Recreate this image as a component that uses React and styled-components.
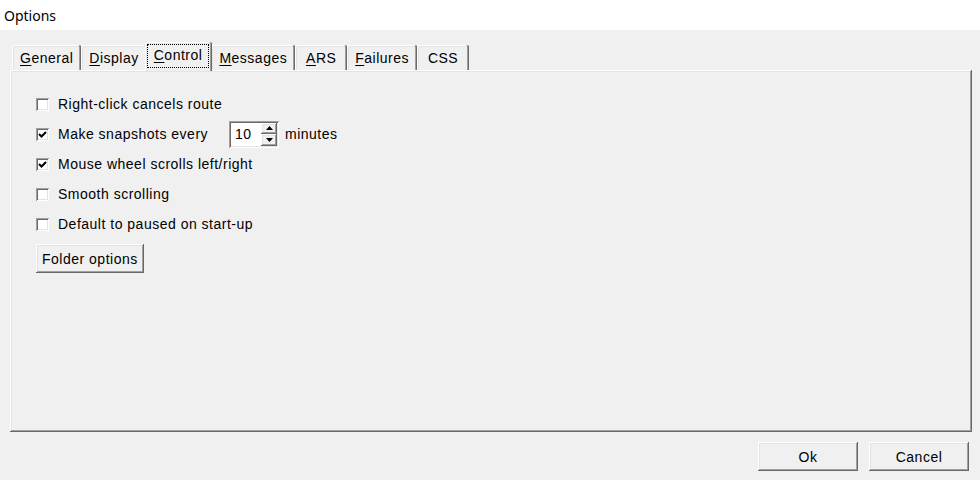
import React, { useState } from 'react';
import styled, { createGlobalStyle, css } from 'styled-components';

const FACE = '#f0f0f0';
const LIGHT = '#e3e3e3';
const SHADOW = '#a0a0a0';
const DARK = '#696969';

const raised = css`
  box-shadow:
    inset -1px -1px ${DARK},
    inset 1px 1px #ffffff,
    inset -2px -2px ${SHADOW},
    inset 2px 2px ${LIGHT};
`;

const sunken = css`
  box-shadow:
    inset 1px 1px ${SHADOW},
    inset -1px -1px #ffffff,
    inset 2px 2px ${DARK},
    inset -2px -2px ${LIGHT};
`;

const GlobalStyle = createGlobalStyle`
  html, body {
    margin: 0;
    padding: 0;
    background: ${FACE};
  }
  body {
    font-family: "Liberation Sans", Arial, sans-serif;
    font-size: 14px;
    letter-spacing: 0.5px;
    color: #000000;
  }
`;

const Window = styled.div`
  width: 980px;
  height: 480px;
  display: flex;
  flex-direction: column;
  background: ${FACE};
  overflow: hidden;
`;

const TitleBar = styled.div`
  height: 30px;
  flex-shrink: 0;
  display: flex;
  align-items: center;
  padding-left: 4px;
  background: #ffffff;
  font-family: "Noto Sans", "Open Sans", sans-serif;
  font-size: 14px;
  letter-spacing: 0;
`;

const Body = styled.div`
  display: flex;
  flex-direction: column;
  padding: 12px 8px 0 10px;
`;

const TabStrip = styled.div`
  display: flex;
  align-items: flex-end;
  height: 28px;
  padding-left: 2px;
`;

const Tab = styled.button`
  position: relative;
  display: flex;
  align-items: center;
  justify-content: center;
  min-width: 52px;
  margin: 0;
  padding: 0 8px;
  height: 25px;
  border: none;
  border-radius: 2px 2px 0 0;
  background: ${FACE};
  font: inherit;
  letter-spacing: inherit;
  color: inherit;
  cursor: default;
  box-shadow:
    inset -1px 0 ${DARK},
    inset 1px 1px #ffffff,
    inset -2px 0 ${SHADOW},
    inset 2px 2px ${LIGHT};

  ${(p) =>
    p.$active &&
    css`
      z-index: 1;
      height: 29px;
      margin: 0 -1px -1px -2px;
      padding: 2px 3px 3px 2px;
    `}
`;

const TabLabel = styled.span`
  display: flex;
  align-items: center;
  ${(p) =>
    p.$focused &&
    css`
      height: 100%;
      padding: 0 7px 2px;
      box-sizing: border-box;
      outline: 1px dotted #000000;
      outline-offset: -1px;
    `}
`;

const Key = styled.span`
  text-decoration: underline;
  text-underline-offset: 2px;
`;

const Panel = styled.div`
  height: 362px;
  box-sizing: border-box;
  display: flex;
  flex-direction: column;
  padding: 19px 26px 0;
  background: ${FACE};
  ${raised};
`;

const Row = styled.label`
  display: flex;
  align-items: center;
  height: 30px;
`;

const Box = styled.span`
  width: 13px;
  height: 13px;
  flex-shrink: 0;
  margin-right: 9px;
  background: #ffffff;
  ${sunken};
  display: flex;
  align-items: center;
  justify-content: center;
`;

const LabelSlot = styled.span`
  width: ${(p) => (p.$width ? `${p.$width}px` : 'auto')};
  flex-shrink: 0;
`;

const Spinner = styled.div`
  display: flex;
  width: 50px;
  height: 27px;
  box-sizing: border-box;
  padding: 2px;
  background: #ffffff;
  ${sunken};
`;

const SpinValue = styled.span`
  flex: 1;
  display: flex;
  align-items: center;
  padding-left: 4px;
`;

const SpinButtons = styled.div`
  display: flex;
  flex-direction: column;
  width: 16px;
`;

const SpinButton = styled.span`
  flex: 1;
  display: flex;
  align-items: center;
  justify-content: center;
  background: ${FACE};
  ${raised};
`;

const Suffix = styled.span`
  margin-left: 6px;
`;

const PushButton = styled.button`
  margin: 0;
  padding: 0 6px;
  height: 29px;
  width: ${(p) => (p.$width ? `${p.$width}px` : 'auto')};
  border: none;
  background: ${FACE};
  font: inherit;
  letter-spacing: inherit;
  color: inherit;
  ${raised};
`;

const FolderButton = styled(PushButton)`
  align-self: flex-start;
  margin-top: 5px;
`;

const Footer = styled.div`
  display: flex;
  justify-content: flex-end;
  gap: 11px;
  padding: 10px 11px 0 0;
`;

function Check({ checked }) {
  return (
    <Box>
      {checked && (
        <svg width="9" height="9" viewBox="0 0 9 9">
          <polyline points="1,4 3.5,6.5 8,2" fill="none" stroke="#000" strokeWidth="2" />
        </svg>
      )}
    </Box>
  );
}

function Arrow({ up }) {
  return (
    <svg width="7" height="4" viewBox="0 0 7 4">
      <polygon points={up ? '0,4 7,4 3.5,0' : '0,0 7,0 3.5,4'} fill="#000" />
    </svg>
  );
}

const TABS = [
  { key: 'G', rest: 'eneral' },
  { key: 'D', rest: 'isplay' },
  { key: 'C', rest: 'ontrol' },
  { key: 'M', rest: 'essages' },
  { key: 'A', rest: 'RS' },
  { key: 'F', rest: 'ailures' },
  { key: '', rest: 'CSS' },
];

const OPTIONS = [
  { label: 'Right-click cancels route', checked: false },
  { label: 'Make snapshots every', checked: true, spinner: 10 },
  { label: 'Mouse wheel scrolls left/right', checked: true },
  { label: 'Smooth scrolling', checked: false },
  { label: 'Default to paused on start-up', checked: false },
];

export default function App() {
  const [active, setActive] = useState(2);

  return (
    <>
      <GlobalStyle />
      <Window>
        <TitleBar>Options</TitleBar>
        <Body>
          <TabStrip>
            {TABS.map((t, i) => (
              <Tab key={t.rest} $active={i === active} onClick={() => setActive(i)}>
                <TabLabel $focused={i === active}>
                  {t.key && <Key>{t.key}</Key>}
                  {t.rest}
                </TabLabel>
              </Tab>
            ))}
          </TabStrip>
          <Panel>
            {OPTIONS.map((o) => (
              <Row key={o.label}>
                <Check checked={o.checked} />
                <LabelSlot $width={o.spinner ? 171 : 0}>{o.label}</LabelSlot>
                {o.spinner && (
                  <>
                    <Spinner>
                      <SpinValue>{o.spinner}</SpinValue>
                      <SpinButtons>
                        <SpinButton><Arrow up /></SpinButton>
                        <SpinButton><Arrow /></SpinButton>
                      </SpinButtons>
                    </Spinner>
                    <Suffix>minutes</Suffix>
                  </>
                )}
              </Row>
            ))}
            <FolderButton>Folder options</FolderButton>
          </Panel>
        </Body>
        <Footer>
          <PushButton $width={100}>Ok</PushButton>
          <PushButton $width={100}>Cancel</PushButton>
        </Footer>
      </Window>
    </>
  );
}
